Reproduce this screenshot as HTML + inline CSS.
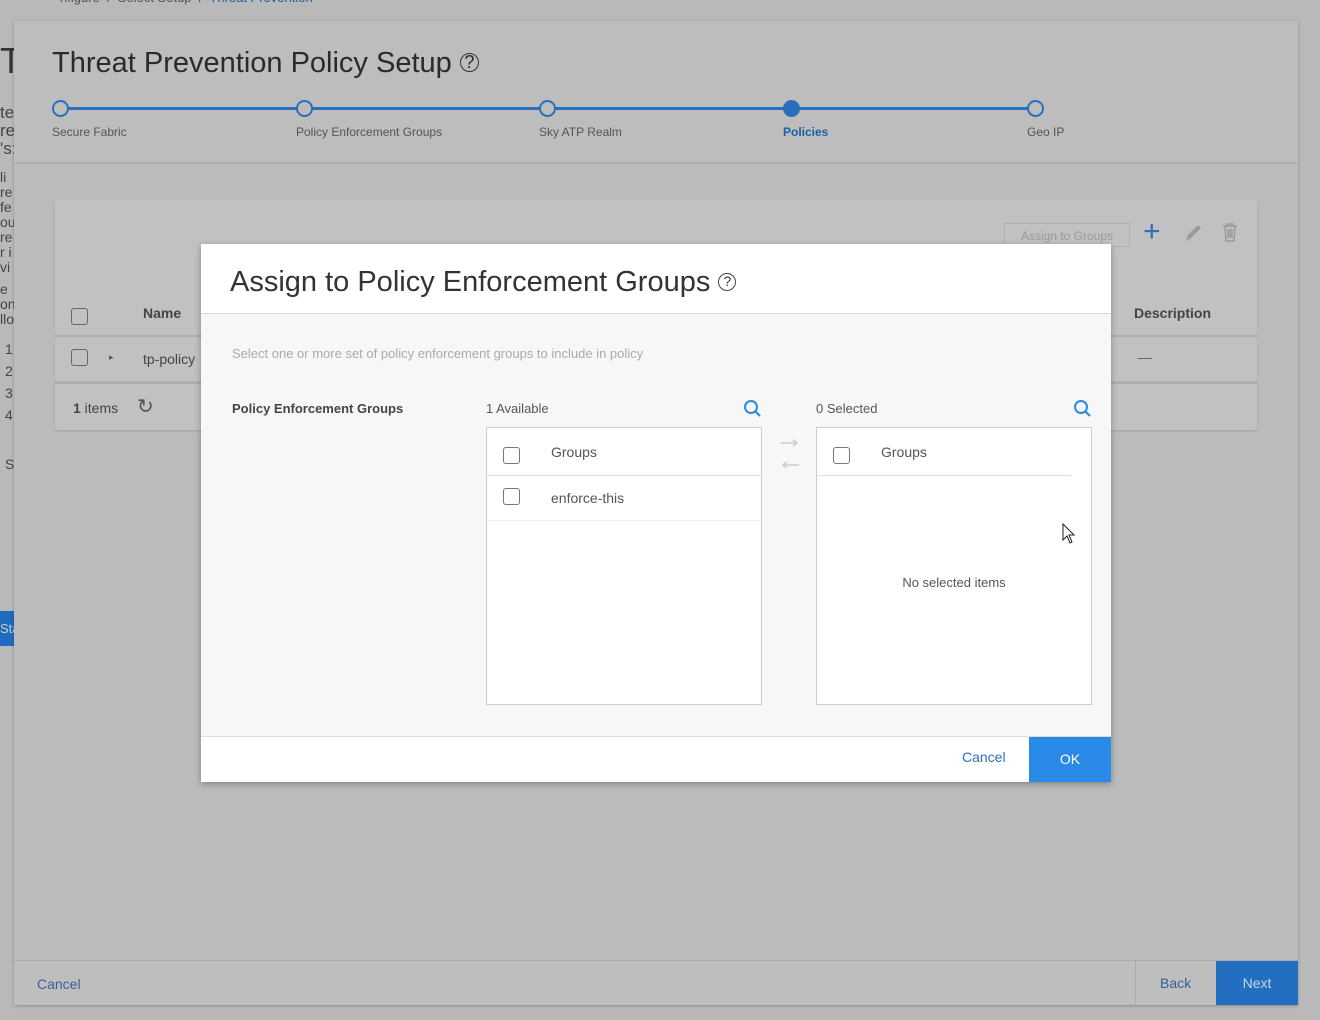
<!DOCTYPE html>
<html><head><meta charset="utf-8"><style>
*{box-sizing:border-box;margin:0;padding:0}
body{width:1320px;height:1020px;overflow:hidden;background:#b9b9b9;font-family:"Liberation Sans",sans-serif;position:relative;color:#333}
.a{position:absolute}
.cb{position:absolute;width:17px;height:17px;border:1.5px solid #666;border-radius:3px}
.gcb{border-color:#777}
</style></head><body>
<div class="a" style="left:0;top:40px;font-size:36px;color:#333">Tl</div>
<div class="a" style="left:0;top:104px;font-size:17px;line-height:18px;color:#444">te<br>re<br>'s:</div>
<div class="a" style="left:0;top:170px;font-size:14px;line-height:15px;color:#444">li<br>re<br>fe<br>ou<br>re<br>r i<br>vi</div>
<div class="a" style="left:0;top:282px;font-size:14px;line-height:15px;color:#444">e<br>on<br>llo</div>
<div class="a" style="left:5px;top:338px;font-size:14px;line-height:22px;color:#444">1<br>2<br>3<br>4</div>
<div class="a" style="left:5px;top:456px;font-size:14px;color:#444">S</div>
<div class="a" style="left:0;top:611px;width:14px;height:35px;background:#1f6bbf;color:#ccc;font-size:13px;line-height:35px;overflow:hidden">Sta</div>
<div class="a" style="left:60px;top:-10px;font-size:13px;color:#555">nfigure &nbsp;/&nbsp; Select Setup &nbsp;/&nbsp; <span style="color:#1a5ea8">Threat Prevention</span></div>
<div class="a" style="left:14px;top:21px;width:1284px;height:984px;background:#bbbbbb;box-shadow:0 1px 3px rgba(0,0,0,.25)">
  <div class="a" style="left:0;top:0;width:1284px;height:143px;background:#bdbdbd;border-bottom:2px solid #adadad"></div>
  <div class="a" style="left:38px;top:26px;font-size:29px;color:#2b2b2b">Threat Prevention Policy Setup <span style="font-size:18px;display:inline-block;width:19px;height:19px;border:1.5px solid #333;border-radius:50%;text-align:center;line-height:16px;vertical-align:4px">?</span></div>
  <div class="a" style="left:46px;top:86px;width:976px;height:3px;background:#2a6fbe"></div>
  <div class="a" style="left:38px;top:79px;width:17px;height:17px;border:2.5px solid #2a6fbe;border-radius:50%;background:#bdbdbd"></div>
  <div class="a" style="left:282px;top:79px;width:17px;height:17px;border:2.5px solid #2a6fbe;border-radius:50%;background:#bdbdbd"></div>
  <div class="a" style="left:525px;top:79px;width:17px;height:17px;border:2.5px solid #2a6fbe;border-radius:50%;background:#bdbdbd"></div>
  <div class="a" style="left:769px;top:79px;width:17px;height:17px;border:2.5px solid #2a6fbe;border-radius:50%;background:#2a6fbe"></div>
  <div class="a" style="left:1013px;top:79px;width:17px;height:17px;border:2.5px solid #2a6fbe;border-radius:50%;background:#bdbdbd"></div>
  <div class="a" style="left:38px;top:104px;font-size:12px;color:#555">Secure Fabric</div>
  <div class="a" style="left:282px;top:104px;font-size:12px;color:#555">Policy Enforcement Groups</div>
  <div class="a" style="left:525px;top:104px;font-size:12px;color:#555">Sky ATP Realm</div>
  <div class="a" style="left:769px;top:104px;font-size:12px;color:#1f5fa8;font-weight:bold">Policies</div>
  <div class="a" style="left:1013px;top:104px;font-size:12px;color:#555">Geo IP</div>
  <div class="a" style="left:41px;top:179px;width:1202px;height:230px;background:#c1c1c1;box-shadow:0 1px 2px rgba(0,0,0,.15)">
    <div class="a" style="left:949px;top:23px;width:126px;height:24px;border:1px solid #b0b0b0;font-size:12px;color:#999;text-align:center;line-height:24px">Assign to Groups</div>
    <div class="a" style="left:1088px;top:17px;font-size:30px;color:#2a6fbe;line-height:30px">+</div>
    <svg class="a" style="left:1128px;top:22px" width="20" height="22"><path d="M3 19L5 13L15 3L18 6L8 16Z" fill="#9a9a9a"/></svg>
    <svg class="a" style="left:1166px;top:22px" width="18" height="22"><path d="M2 4H16M6 4V2H12V4M4 4L5 19H13L14 4M7 7V16M9 7V16M11 7V16" fill="none" stroke="#9a9a9a" stroke-width="1.5"/></svg>
    <div class="a" style="left:0;top:135px;width:1202px;height:2px;background:#b0b0b0"></div>
    <div class="a" style="left:0;top:181px;width:1202px;height:3px;background:#b0b0b0"></div>
    <div class="cb" style="left:16px;top:108px"></div>
    <div class="a" style="left:88px;top:105px;font-size:14px;font-weight:bold;color:#444">Name</div>
    <div class="a" style="left:1079px;top:105px;font-size:14px;font-weight:bold;color:#444">Description</div>
    <div class="cb" style="left:16px;top:149px"></div>
    <div class="a" style="left:54px;top:152px;font-size:9px;color:#555">▸</div>
    <div class="a" style="left:88px;top:151px;font-size:14px;color:#444">tp-policy</div>
    <div class="a" style="left:1083px;top:149px;font-size:14px;color:#666">—</div>
    <div class="a" style="left:18px;top:200px;font-size:14px;color:#444"><b>1</b> items</div>
    <div class="a" style="left:82px;top:194px;font-size:20px;color:#555">↻</div>
  </div>
  <div class="a" style="left:0;top:939px;width:1284px;height:45px;background:#bebebe;border-top:1px solid #aaa"></div>
  <div class="a" style="left:23px;top:955px;font-size:14px;color:#355f9a">Cancel</div>
  <div class="a" style="left:1121px;top:940px;width:1px;height:44px;background:#aaa"></div>
  <div class="a" style="left:1146px;top:954px;font-size:14px;color:#355f9a">Back</div>
  <div class="a" style="left:1202px;top:940px;width:82px;height:44px;background:#236ec0;color:#c6d6ea;font-size:14px;text-align:center;line-height:44px">Next</div>
</div>
<div class="a" style="left:201px;top:244px;width:910px;height:538px;background:#f8f7f7;box-shadow:0 2px 6px rgba(0,0,0,.3)">
  <div class="a" style="left:0;top:0;width:910px;height:70px;background:#fff;border-bottom:1px solid #d6d6d6"></div>
  <div class="a" style="left:29px;top:22px;font-size:29px;color:#333">Assign to Policy Enforcement Groups <span style="font-size:14px;display:inline-block;width:18px;height:18px;border:1.5px solid #444;border-radius:50%;text-align:center;line-height:15px;vertical-align:5px">?</span></div>
  <div class="a" style="left:31px;top:102px;font-size:13px;color:#aaa">Select one or more set of policy enforcement groups to include in policy</div>
  <div class="a" style="left:31px;top:157px;font-size:13px;font-weight:bold;color:#444">Policy Enforcement Groups</div>
  <div class="a" style="left:285px;top:157px;font-size:13px;color:#555">1 Available</div>
  <div class="a" style="left:615px;top:157px;font-size:13px;color:#555">0 Selected</div>
  <svg class="a" style="left:542px;top:155px" width="20" height="20"><circle cx="8" cy="8" r="6" fill="none" stroke="#2b8be0" stroke-width="2"/><path d="M12 12L17 17" stroke="#2b8be0" stroke-width="2.2"/></svg>
  <svg class="a" style="left:872px;top:155px" width="20" height="20"><circle cx="8" cy="8" r="6" fill="none" stroke="#2b8be0" stroke-width="2"/><path d="M12 12L17 17" stroke="#2b8be0" stroke-width="2.2"/></svg>
  <div class="a" style="left:285px;top:183px;width:276px;height:278px;background:#fff;border:1px solid #ccc">
    <div class="cb gcb" style="left:16px;top:19px"></div>
    <div class="a" style="left:64px;top:16px;font-size:14px;color:#555">Groups</div>
    <div class="a" style="left:0;top:47px;width:274px;height:1px;background:#ddd"></div>
    <div class="cb gcb" style="left:16px;top:60px"></div>
    <div class="a" style="left:64px;top:62px;font-size:14px;color:#555">enforce-this</div>
    <div class="a" style="left:0;top:92px;width:274px;height:1px;background:#eee"></div>
  </div>
  <svg class="a" style="left:578px;top:194px" width="22" height="30"><path d="M2 5H18M14 2L18 5L14 8" fill="none" stroke="#ccc" stroke-width="1.5"/><path d="M20 27H4M8 24L4 27L8 30" fill="none" stroke="#ccc" stroke-width="1.5"/></svg>
  <div class="a" style="left:615px;top:183px;width:276px;height:278px;background:#fff;border:1px solid #ccc">
    <div class="cb gcb" style="left:16px;top:19px"></div>
    <div class="a" style="left:64px;top:16px;font-size:14px;color:#555">Groups</div>
    <div class="a" style="left:0;top:47px;width:254px;height:1px;background:#ddd"></div>
    <div class="a" style="left:0;top:147px;width:274px;text-align:center;font-size:13px;color:#555">No selected items</div>
    <svg class="a" style="left:245px;top:95px" width="14" height="22"><path d="M1 1L1 17L5 13L8 20L10 19L7 12L12 12Z" fill="#fff" stroke="#222" stroke-width="1"/></svg>
  </div>
  <div class="a" style="left:0;top:492px;width:910px;height:46px;background:#fff;border-top:1px solid #ddd"></div>
  <div class="a" style="left:761px;top:505px;font-size:14px;color:#2b70c4">Cancel</div>
  <div class="a" style="left:828px;top:493px;width:82px;height:45px;background:#2a8ae8;color:#fff;font-size:14px;text-align:center;line-height:45px">OK</div>
</div>
</body></html>
